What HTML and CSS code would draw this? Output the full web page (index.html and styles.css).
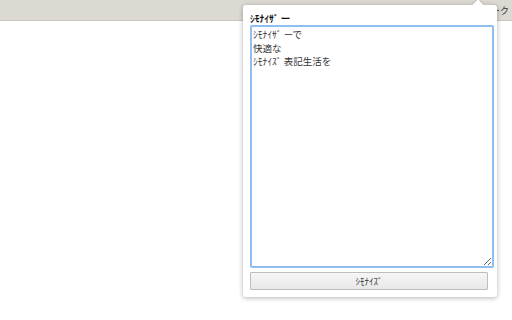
FILE: index.html
```html
<!DOCTYPE html>
<html lang="ja">
<head>
    <meta charset="UTF-8">
    <title>ｼﾓﾅｲｻﾞー</title>
    <link rel="stylesheet" href="styles.css">
</head>
<body>
    <div class="toolbar">
        <span class="toolbar-label">ブックマーク</span>
    </div>

    <div class="popup">
        <div class="popup-arrow"></div>
        <div class="popup-title">ｼﾓﾅｲｻﾞ ー</div>
        <textarea class="popup-input">ｼﾓﾅｲｻﾞ ーで
快適な
ｼﾓﾅｲｽﾞ 表記生活を</textarea>
        <button class="popup-btn">ｼﾓﾅｲｽﾞ</button>
    </div>
</body>
</html>
```

FILE: styles.css
```css
body, html {
    margin: 0;
    padding: 0;
    height: 100%;
    overflow: hidden;
    background: #fff;
    font-family: "Noto Sans CJK JP", "Liberation Sans", sans-serif;
}

.toolbar {
    height: 20px;
    background-color: #dcd8d2;
    border-bottom: 1px solid #c9c5be;
    display: flex;
    justify-content: flex-end;
    align-items: center;
}

.toolbar-label {
    font-size: 9px;
    color: #333;
    margin-right: 3px;
    margin-top: 0;
}

.popup {
    position: absolute;
    left: 243px;
    top: 5px;
    width: 240px;
    height: 278px;
    padding: 7px 7px;
    background: #fff;
    border-radius: 3px;
    box-shadow: 0 1px 5px rgba(0, 0, 0, 0.3);
    display: flex;
    flex-direction: column;
}

.popup-arrow {
    position: absolute;
    top: -4px;
    left: 231px;
    width: 8px;
    height: 8px;
    background: #fff;
    transform: rotate(45deg);
    box-shadow: -1px -1px 2px rgba(0, 0, 0, 0.12);
}

.popup-title {
    font-size: 9.5px;
    font-weight: bold;
    line-height: 13px;
    color: #111;
    position: relative;
}

.popup-input {
    width: 244px;
    height: 243px;
    box-sizing: border-box;
    margin: 0;
    padding: 1px 1px;
    border: 2px solid #8fbef0;
    border-radius: 2px;
    font-family: inherit;
    font-size: 9.5px;
    line-height: 13.5px;
    color: #333;
    resize: both;
    outline: none;
}

.popup-btn {
    margin-top: 4px;
    width: 238px;
    height: 18px;
    border: 1px solid #bdbdbd;
    border-radius: 1px;
    background: linear-gradient(#f6f6f6, #e8e8e8);
    font-family: inherit;
    font-size: 9px;
    color: #333;
    padding: 0;
}
```
